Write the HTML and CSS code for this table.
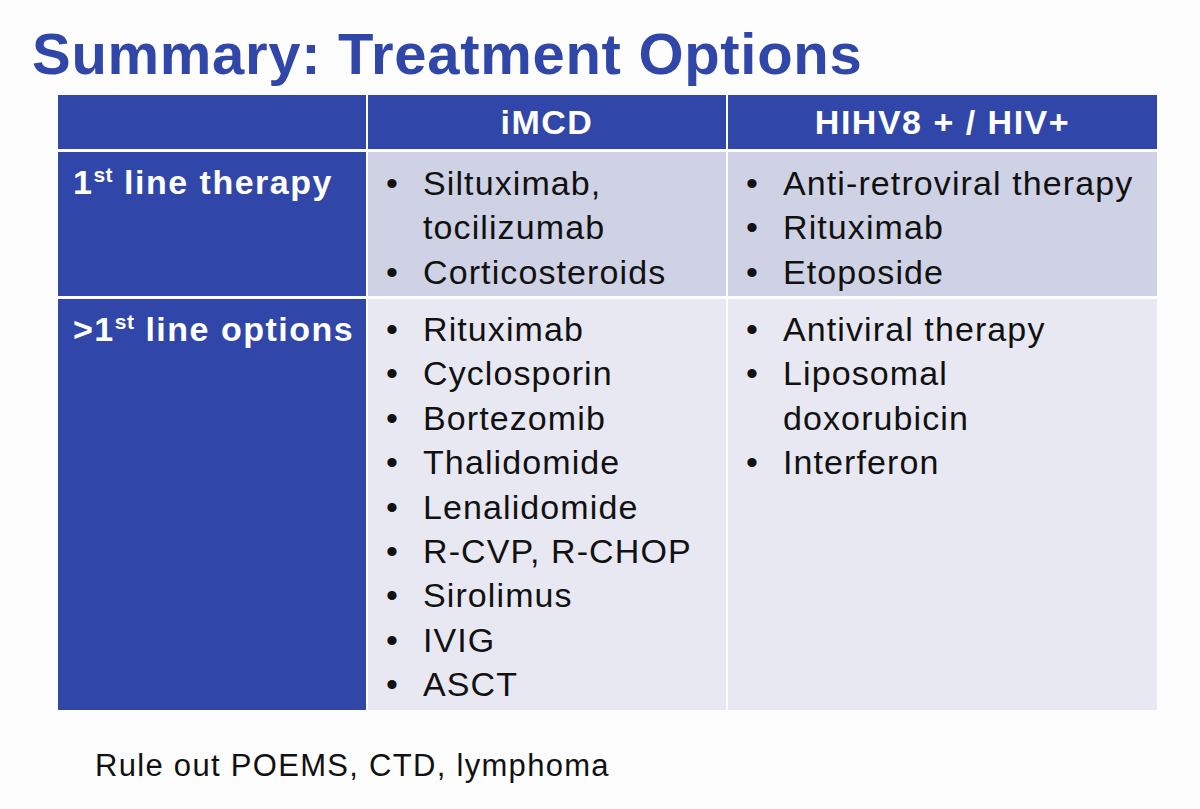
FILE: index.html
```html
<!DOCTYPE html>
<html lang="en">
<head>
  <meta charset="UTF-8" />
  <title>Summary: Treatment Options</title>
  <link rel="stylesheet" href="styles.css">
</head>
<body>

  <div class="slide">
    <h1 class="title">Summary: Treatment Options</h1>

    <div class="grid">
      <div class="cell head"></div>
      <div class="cell head center">iMCD</div>
      <div class="cell head center">HIHV8 + / HIV+</div>

      <div class="cell side">1<sup>st</sup> line therapy</div>
      <div class="cell row-a">
        <ul class="items">
          <li>Siltuximab, tocilizumab</li>
          <li>Corticosteroids</li>
        </ul>
      </div>
      <div class="cell row-a">
        <ul class="items">
          <li>Anti-retroviral therapy</li>
          <li>Rituximab</li>
          <li>Etoposide</li>
        </ul>
      </div>

      <div class="cell side side-b">&gt;1<sup>st</sup> line options</div>
      <div class="cell row-b">
        <ul class="items">
          <li>Rituximab</li>
          <li>Cyclosporin</li>
          <li>Bortezomib</li>
          <li>Thalidomide</li>
          <li>Lenalidomide</li>
          <li>R-CVP, R-CHOP</li>
          <li>Sirolimus</li>
          <li>IVIG</li>
          <li>ASCT</li>
        </ul>
      </div>
      <div class="cell row-b">
        <ul class="items">
          <li>Antiviral therapy</li>
          <li>Liposomal doxorubicin</li>
          <li>Interferon</li>
        </ul>
      </div>
    </div>

    <p class="note">Rule out POEMS, CTD, lymphoma</p>
  </div>

</body>
</html>
```

FILE: styles.css
```css
body {
  margin: 0;
  background: #fdfdfd;
  font-family: "Liberation Sans", Arial, sans-serif;
  color: #111;
}

.slide {
  width: 1200px;
  height: 809px;
  overflow: hidden;
}

.title {
  margin: 0;
  padding: 25px 0 0 32px;
  height: 73px;
  box-sizing: border-box;
  font-size: 58px;
  letter-spacing: 0.7px;
  line-height: 1;
  font-weight: bold;
  color: #3046a8;
}

.grid {
  display: grid;
  grid-template-columns: 308px 358px 429px;
  grid-template-rows: 54px 144px 411px;
  column-gap: 2px;
  row-gap: 3px;
  margin: 22px 0 0 58px;
  width: 1099px;
}

.cell {
  box-sizing: border-box;
}

.head {
  background: #3046a8;
  color: #fff;
  font-weight: bold;
  font-size: 34px;
  letter-spacing: 1.5px;
  line-height: 54px;
}

.center {
  text-align: center;
}

.side {
  background: #3046a8;
  color: #fff;
  font-weight: bold;
  font-size: 34px;
  letter-spacing: 1.5px;
  padding: 11px 0 0 15px;
}

.side sup {
  font-size: 21px;
  letter-spacing: 0.5px;
  vertical-align: 12px;
  line-height: 0;
}

.row-a {
  background: #cfd1e4;
  padding: 9px 0 0 0;
}

.row-b {
  background: #e8e8f3;
  padding: 8px 0 0 0;
}

.items {
  list-style: none;
  margin: 0;
  padding: 0 20px 0 55px;
  font-size: 34px;
  letter-spacing: 1.1px;
  line-height: 44.4px;
}

.items li {
  position: relative;
}

.items li::before {
  content: "\2022";
  position: absolute;
  left: -37px;
  letter-spacing: 0;
}

.note {
  margin: 40px 0 0 95px;
  font-size: 31px;
  letter-spacing: 1.3px;
  line-height: 1;
  color: #111;
}
```
